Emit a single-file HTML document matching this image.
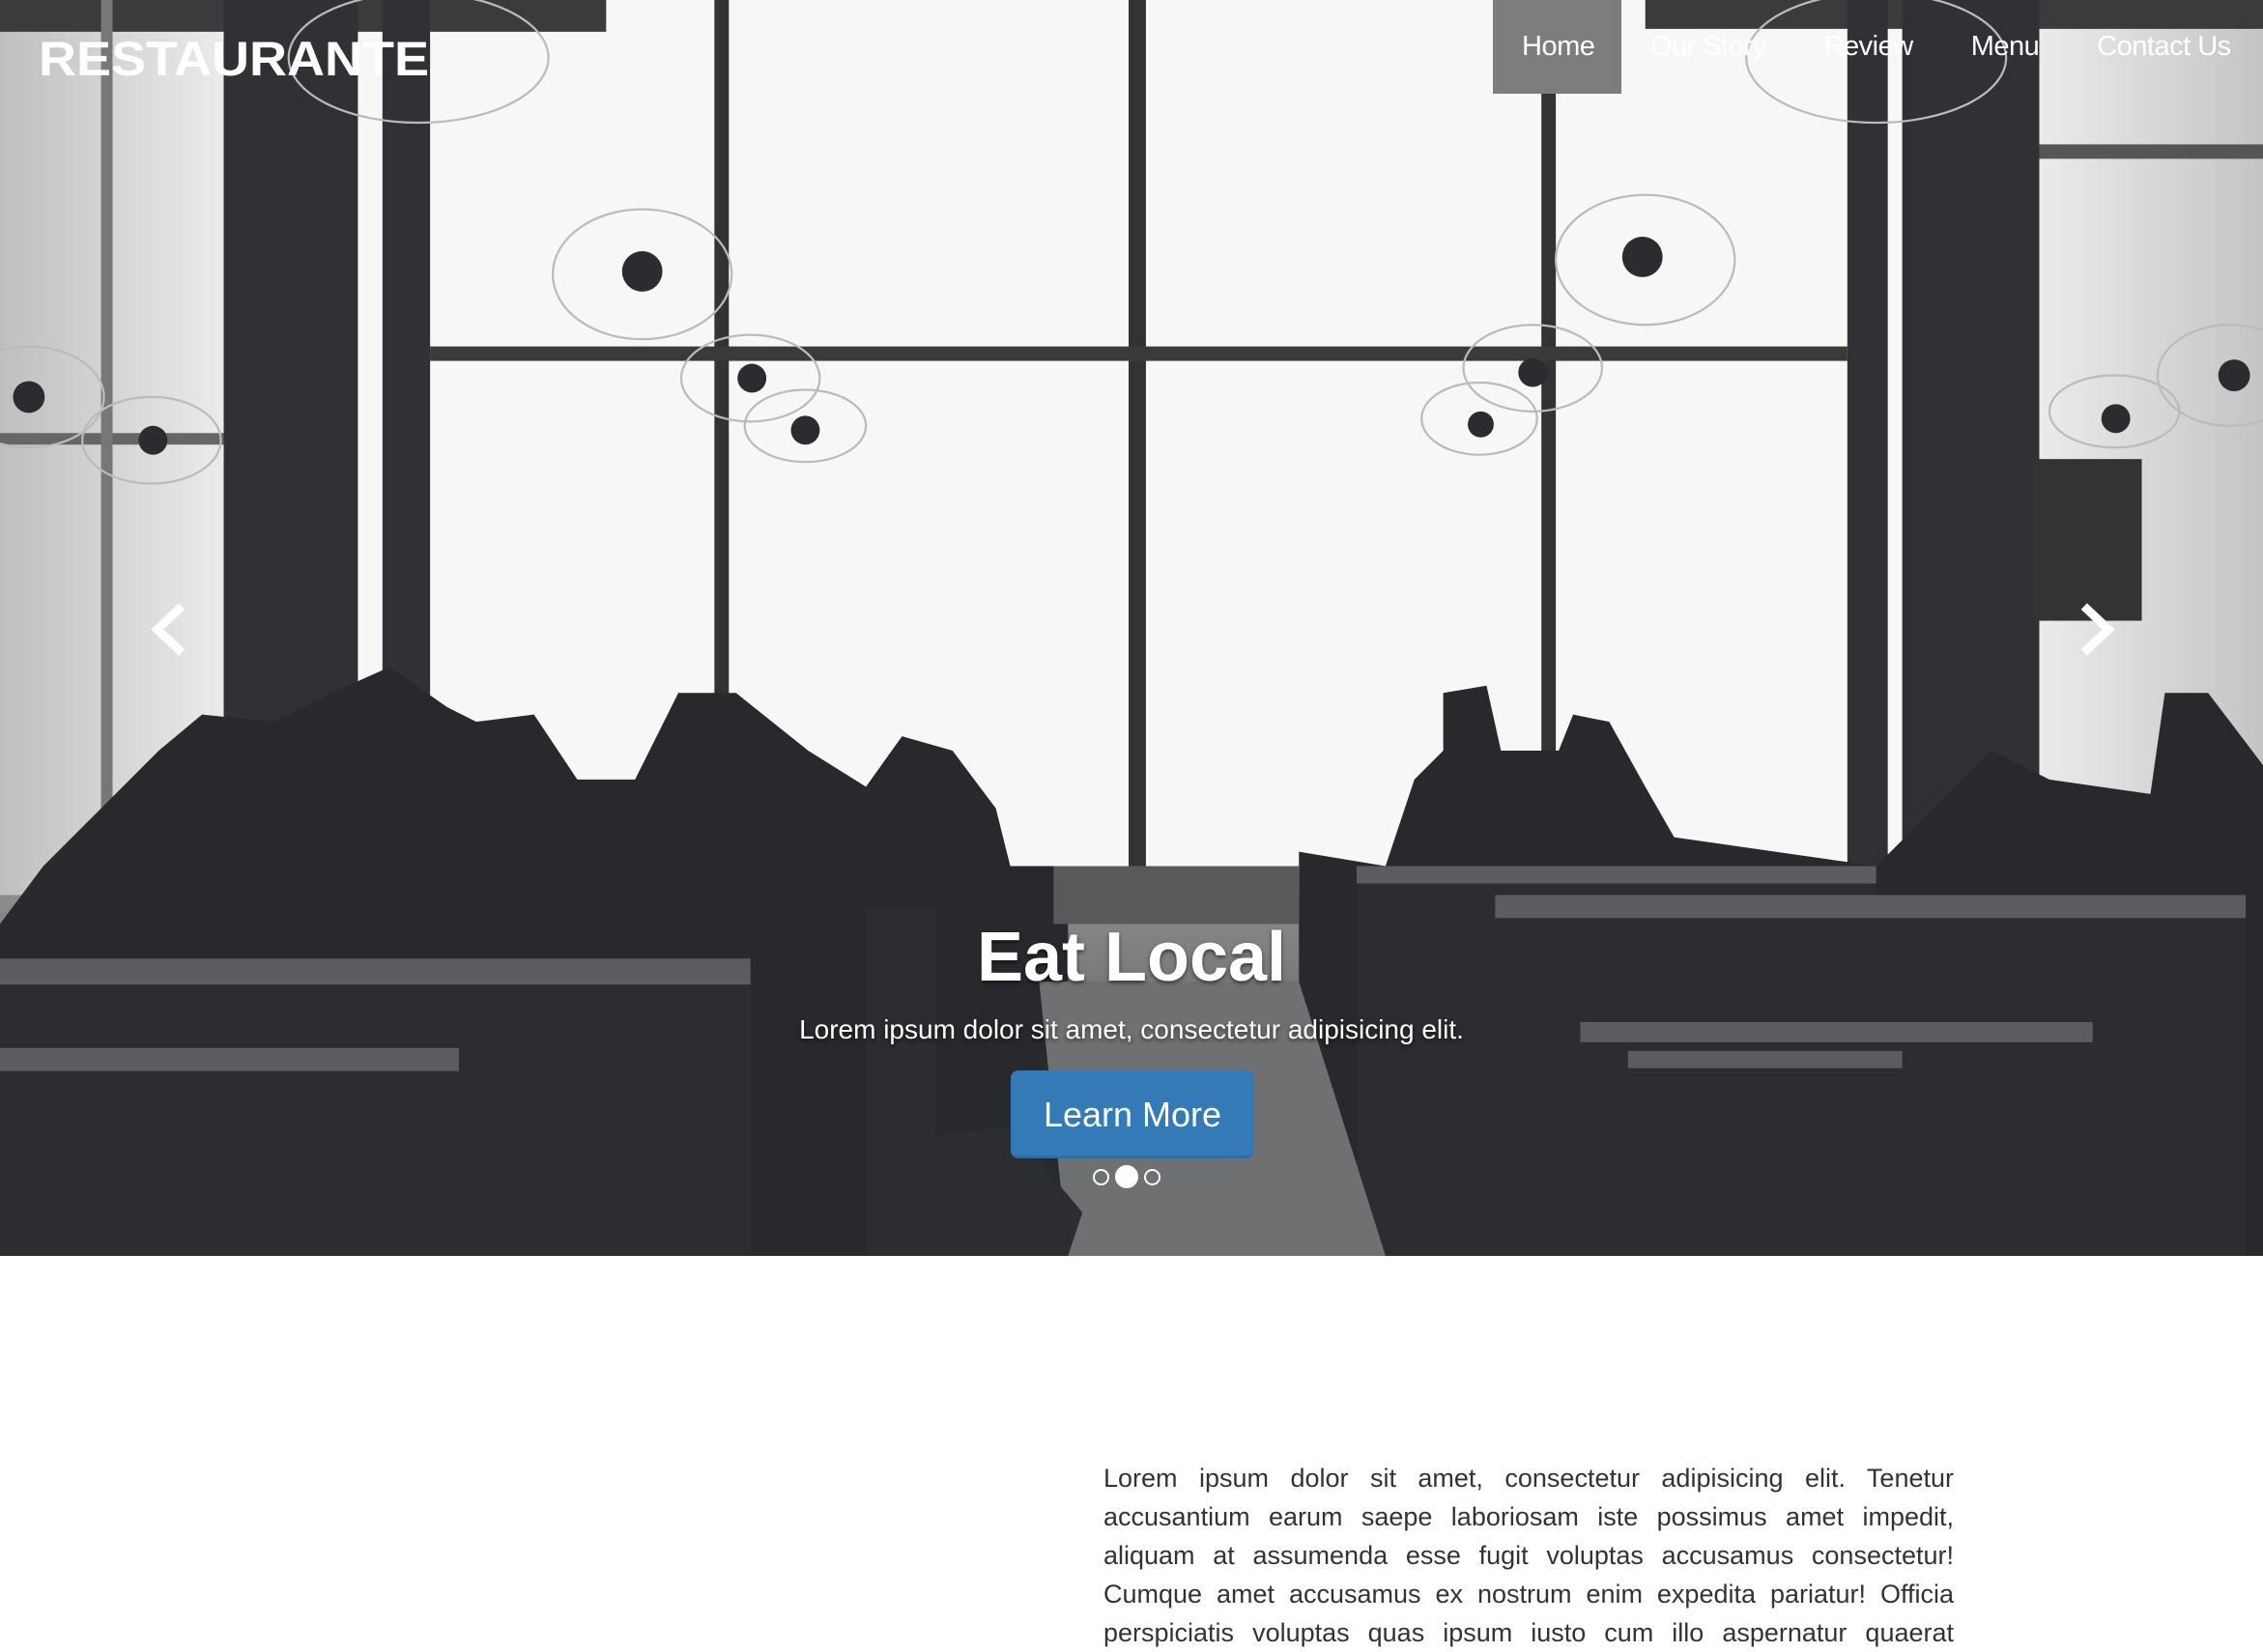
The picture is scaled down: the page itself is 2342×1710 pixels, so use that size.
<!DOCTYPE html>
<html><head><meta charset="utf-8"><style>
html,body{margin:0;padding:0;width:2342px;height:1706px;overflow:hidden;background:#fff;font-family:"Liberation Sans",Arial,sans-serif}
.hero{position:absolute;left:0;top:0;width:2342px;height:1300px;overflow:hidden}
.hero svg{position:absolute;left:0;top:0}
.logo{position:absolute;left:40px;top:32px;font-size:50px;font-weight:900;color:#fff;letter-spacing:0px;transform:scaleX(1.08);transform-origin:left}
.nav{position:absolute;top:0;left:1545px;height:97px;display:flex}
.nav a{display:block;color:#fff;font-size:29px;line-height:97px;text-decoration:none;padding:0 30px;letter-spacing:-0.5px}
.nav a.act{background:#7d7d7d;width:73px;text-align:center}
.cap{position:absolute;left:0;width:2342px;text-align:center;color:#fff;text-shadow:0 2px 4px rgba(0,0,0,.6)}
.h1{top:950px;font-size:72px;font-weight:700}
.sub{top:1050px;font-size:28px}
.btn{position:absolute;left:1046px;top:1108px;width:252px;height:91px;background:#337ab7;border-radius:8px;color:#fff;font-size:36px;line-height:91px;text-align:center;border-bottom:3px solid #2e6da4;box-sizing:border-box}
.dots{position:absolute;left:1131px;top:1206px;display:flex;gap:6px;align-items:center}
.dots span{width:17px;height:17px;border:2px solid #fff;border-radius:50%;box-sizing:border-box}
.dots span.on{width:24px;height:24px;background:#fff}
.text{position:absolute;left:1142px;top:1510px;width:880px;font-size:27px;line-height:40px;color:#333;text-align:justify;text-align-last:justify}
</style></head><body>
<div class="hero">
<svg width="2342" height="1300" viewBox="0 0 1568 870" preserveAspectRatio="none">
<defs>
<linearGradient id="lg" x1="0" x2="1"><stop offset="0" stop-color="#bfbfbf"/><stop offset="1" stop-color="#ececec"/></linearGradient>
<linearGradient id="rg" x1="0" x2="1"><stop offset="0" stop-color="#ececec"/><stop offset="1" stop-color="#c4c4c4"/></linearGradient>
<linearGradient id="fl" x1="0" y1="0" x2="0" y2="1"><stop offset="0" stop-color="#8a8c8e"/><stop offset="1" stop-color="#3a3c3f"/></linearGradient>
</defs>
<rect width="1568" height="870" fill="#f7f7f7"/>
<rect x="0" y="0" width="160" height="870" fill="url(#lg)"/>
<rect x="1410" y="0" width="158" height="870" fill="url(#rg)"/>
<rect x="0" y="0" width="420" height="22" fill="#3a3b3d"/>
<rect x="1140" y="0" width="428" height="20" fill="#3a3b3d"/>
<rect x="1410" y="100" width="158" height="10" fill="#555"/>
<rect x="0" y="300" width="160" height="8" fill="#666"/>
<rect x="155" y="0" width="93" height="620" fill="#2f3134"/>
<rect x="265" y="0" width="33" height="620" fill="#2f3134"/>
<rect x="70" y="0" width="8" height="600" fill="#777"/>
<rect x="495" y="0" width="10" height="560" fill="#333"/>
<rect x="782" y="0" width="12" height="610" fill="#333"/>
<rect x="1068" y="0" width="10" height="560" fill="#333"/>
<rect x="298" y="240" width="982" height="10" fill="#3a3a3a"/>
<rect x="1280" y="0" width="28" height="640" fill="#2f3134"/>
<rect x="1318" y="0" width="95" height="640" fill="#2f3134"/>
<rect x="1408" y="318" width="76" height="112" fill="#333"/>
<g fill="none" stroke="#bbb" stroke-width="1.5">
<ellipse cx="445" cy="190" rx="62" ry="45"/><ellipse cx="1140" cy="180" rx="62" ry="45"/>
<ellipse cx="520" cy="262" rx="48" ry="30"/><ellipse cx="1062" cy="255" rx="48" ry="30"/>
<ellipse cx="558" cy="295" rx="42" ry="25"/><ellipse cx="1025" cy="290" rx="40" ry="25"/>
<ellipse cx="20" cy="275" rx="52" ry="35"/><ellipse cx="105" cy="305" rx="48" ry="30"/>
<ellipse cx="1465" cy="285" rx="45" ry="25"/><ellipse cx="1545" cy="260" rx="50" ry="35"/>
<ellipse cx="290" cy="40" rx="90" ry="45"/><ellipse cx="1300" cy="40" rx="90" ry="45"/>
</g>
<g fill="#2a2c2f">
<circle cx="445" cy="188" r="14"/><circle cx="1138" cy="178" r="14"/><circle cx="521" cy="262" r="10"/><circle cx="1062" cy="258" r="10"/><circle cx="558" cy="298" r="10"/><circle cx="1026" cy="294" r="9"/><circle cx="20" cy="275" r="11"/><circle cx="106" cy="305" r="10"/><circle cx="1466" cy="290" r="10"/><circle cx="1548" cy="260" r="11"/>
</g>
<rect x="0" y="620" width="1568" height="250" fill="url(#fl)"/>
<path fill="#27292c" d="M0 640 L30 600 L110 520 L140 495 L190 500 L230 480 L270 462 L310 490 L330 500 L370 495 L400 540 L440 540 L470 480 L510 480 L560 520 L600 545 L625 510 L660 520 L690 560 L700 600 L740 600 L740 870 L0 870Z"/>
<path fill="#27292c" d="M960 600 L980 540 L1000 520 L1000 480 L1030 475 L1040 520 L1080 520 L1090 495 L1115 500 L1140 545 L1160 580 L1300 600 L1380 520 L1420 540 L1490 550 L1500 480 L1530 480 L1568 530 L1568 870 L900 870 L900 590Z"/>
<path fill="#58595b" d="M730 600 L900 600 L900 640 L730 640Z"/>
<g fill="#2b2d30">
<rect x="0" y="670" width="520" height="200"/>
<rect x="0" y="730" width="320" height="140"/>
<rect x="600" y="628" width="48" height="242"/>
<rect x="940" y="605" width="360" height="265"/>
<rect x="1036" y="622" width="520" height="248"/>
<rect x="1095" y="712" width="355" height="158"/>
</g>
<g fill="#5a5c5f">
<rect x="0" y="664" width="520" height="18"/>
<rect x="0" y="726" width="318" height="16"/>
<rect x="1036" y="620" width="520" height="16"/>
<rect x="940" y="600" width="360" height="12"/>
<rect x="1095" y="708" width="355" height="14"/>
<rect x="1128" y="728" width="190" height="12"/>
</g>
<path fill="#6e7072" d="M720 680 L900 680 L960 870 L740 870Z"/>
<path fill="#2b2d30" d="M620 790 L700 780 L750 840 L740 870 L620 870Z"/>
<g fill="none" stroke="#fff" stroke-width="6" stroke-linecap="butt" stroke-linejoin="miter">
<path d="M126 420 L109 436 L126 452"/>
<path d="M1444 420 L1461 436 L1444 452"/>
</g>
</svg>
<div class="logo">RESTAURANTE</div>
<div class="nav"><a class="act">Home</a><a>Our Story</a><a>Review</a><a>Menu</a><a>Contact Us</a></div>
<div class="cap h1">Eat Local</div>
<div class="cap sub">Lorem ipsum dolor sit amet, consectetur adipisicing elit.</div>
<div class="btn">Learn More</div>
<div class="dots"><span></span><span class="on"></span><span></span></div>
</div>
<div class="text">Lorem ipsum dolor sit amet, consectetur adipisicing elit. Tenetur accusantium earum saepe laboriosam iste possimus amet impedit, aliquam at assumenda esse fugit voluptas accusamus consectetur! Cumque amet accusamus ex nostrum enim expedita pariatur! Officia perspiciatis voluptas quas ipsum iusto cum illo aspernatur quaerat</div>
</body></html>
